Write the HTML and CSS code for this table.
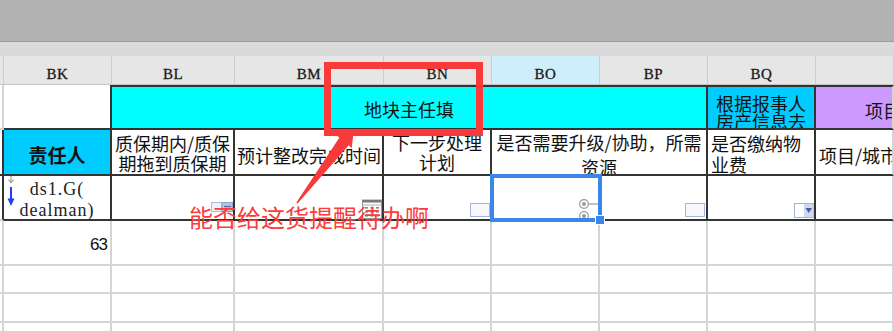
FILE: index.html
```html
<!DOCTYPE html>
<html lang="zh-CN">
<head>
<meta charset="utf-8">
<title>sheet</title>
<link rel="stylesheet" href="styles.css">
</head>
<body>
<div class="app">
  <div class="topbar"></div>
  <div class="band"></div>
  <div class="sheet">
    <!-- column headers -->
    <div class="h"></div>
    <div class="h">BK</div>
    <div class="h">BL</div>
    <div class="h">BM</div>
    <div class="h">BN</div>
    <div class="h hsel">BO</div>
    <div class="h">BP</div>
    <div class="h">BQ</div>
    <div class="h"></div>

    <!-- row 1 -->
    <div class="c"></div>
    <div class="c kr kb"></div>
    <div class="c k t cyan span5 r1title">地块主任填</div>
    <div class="c k t sky r1q">根据报事人<br>房产信息去</div>
    <div class="c kb t purple r1r">项目</div>

    <!-- row 2 -->
    <div class="c kr kb"></div>
    <div class="c k sky r2k">责任人</div>
    <div class="c k r2l">质保期内/质保<br>期拖到质保期</div>
    <div class="c k r2m">预计整改完成时间</div>
    <div class="c k r2n">下一步处理<br>计划</div>
    <div class="c k span2 r2o">是否需要升级/协助，所需<br>资源</div>
    <div class="c k r2q">是否缴纳物<br>业费</div>
    <div class="c kb r2r">项目/城市</div>

    <!-- row 3 -->
    <div class="c kr"></div>
    <div class="c k r3k">
      <svg class="mini-arrow" width="6" height="8" viewBox="0 0 6 8"><path d="M3 0V6M0.5 3.5L3 7L5.5 3.5" fill="none" stroke="#8a8a8a" stroke-width="1"/></svg>
      <svg class="blue-arrow" width="8" height="20" viewBox="0 0 8 20"><path d="M4 0V13" stroke="#1b3dff" stroke-width="2"/><path d="M0.5 11.5H7.5L4 19Z" fill="#1b3dff"/></svg>
      ds1.G(<br>dealman)
    </div>
    <div class="c k ico ico-bl">
      <svg width="22" height="10" viewBox="0 0 22 10"><rect x="0.5" y="0.5" width="10" height="9" fill="#eef3fb" stroke="#a9bde0"/><rect x="11" y="0.5" width="10.5" height="9" fill="#b7c5e0" stroke="#8fa3c8"/><path d="M13 4.5H20" stroke="#5c6f9a" stroke-width="1.4"/></svg>
    </div>
    <div class="c k ico ico-bm">
      <svg width="20" height="20" viewBox="0 0 20 20"><rect x="0.5" y="1" width="19" height="18.5" fill="#fbfbfb" stroke="#9a9a9a"/><rect x="0.5" y="1" width="19" height="2.5" fill="#7a7a7a"/><path d="M1 6H19" stroke="#b5b5b5"/><g fill="#8c8c8c"><rect x="3" y="8" width="3" height="1.6"/><rect x="8.5" y="8" width="3" height="1.6"/><rect x="14" y="8" width="3" height="1.6"/><rect x="3" y="12" width="3" height="1.6"/><rect x="8.5" y="12" width="3" height="1.6"/><rect x="14" y="12" width="3" height="1.6"/><rect x="3" y="16" width="3" height="1.6"/><rect x="8.5" y="16" width="3" height="1.6"/><rect x="14" y="16" width="3" height="1.6"/></g></svg>
    </div>
    <div class="c k ico ico-bn">
      <svg width="20" height="14" viewBox="0 0 20 14"><rect x="0.5" y="0.5" width="19" height="13" fill="#f5f8fd" stroke="#a3b6da"/></svg>
    </div>
    <div class="c k ico ico-bo">
      <div class="selection"><span class="handle"></span></div>
      <svg width="20" height="21" viewBox="0 0 20 21"><g stroke="#9a9a9a" fill="#fff" stroke-width="1.2"><circle cx="6" cy="6" r="4.4"/><circle cx="6" cy="18" r="4.4"/><path d="M10.5 6H20"/></g><g fill="#9a9a9a"><circle cx="6" cy="6" r="2"/><circle cx="6" cy="18" r="2"/></g></svg>
    </div>
    <div class="c k ico ico-bp">
      <svg width="20" height="14" viewBox="0 0 20 14"><rect x="0.5" y="0.5" width="19" height="13" fill="#f5f8fd" stroke="#a3b6da"/></svg>
    </div>
    <div class="c k ico ico-bq">
      <svg width="20" height="15" viewBox="0 0 20 15"><rect x="0.5" y="0.5" width="19" height="14" fill="#fff" stroke="#a3b6da"/><rect x="10" y="1" width="9.5" height="13" fill="#cdd9ef"/><path d="M11.5 5H18L14.75 10Z" fill="#4a5c9c"/></svg>
    </div>
    <div class="c kb"></div>

    <!-- row 4 -->
    <div class="c"></div>
    <div class="c num">63</div>
    <div class="c"></div>
    <div class="c"></div>
    <div class="c"></div>
    <div class="c"></div>
    <div class="c"></div>
    <div class="c"></div>
    <div class="c"></div>

    <!-- row 5 -->
    <div class="c"></div><div class="c"></div><div class="c"></div><div class="c"></div><div class="c"></div><div class="c"></div><div class="c"></div><div class="c"></div><div class="c"></div>
    <!-- row 6 -->
    <div class="c"></div><div class="c"></div><div class="c"></div><div class="c"></div><div class="c"></div><div class="c"></div><div class="c"></div><div class="c"></div><div class="c"></div>
    <!-- row 7 -->
    <div class="c"></div><div class="c"></div><div class="c"></div><div class="c"></div><div class="c"></div><div class="c"></div><div class="c"></div><div class="c"></div><div class="c"></div>
  </div>

  <div class="annot">
    <div class="redbox"></div>
    <svg class="arrow" width="894" height="331" viewBox="0 0 894 331">
      <polygon fill="#f83a3a" points="296.4,202.6 339.3,137.7 336.3,134.8 354,129 351.7,148.2 348.7,145.3 297.6,203.4"/>
    </svg>
    <div class="note">能否给这货提醒待办啊</div>
  </div>
</div>
</body>
</html>
```

FILE: styles.css
```css
html, body {
  margin: 0;
  padding: 0;
  background: #ffffff;
}

.app {
  position: relative;
  width: 894px;
  height: 331px;
  overflow: hidden;
  font-family: "Noto Sans CJK SC", "Noto Sans", sans-serif;
  font-size: 18px;
  color: #111;
}

.topbar {
  height: 41px;
  background: #b3b3b3;
  border-bottom: 1px solid #9c9c9c;
}

.band {
  height: 14px;
  background: #dadada;
}

.sheet {
  display: grid;
  grid-template-columns: 4px 108px 123px 149px 108px 108px 108px 108px 1fr;
  grid-template-rows: 29px 45px 46px 45px 45px 28px 29px 29px;
}

/* column headers */
.h {
  box-sizing: border-box;
  background: #e6e6e6;
  border-right: 1px solid #cdcdcd;
  border-bottom: 1px solid #c4c4c4;
  font-family: "Liberation Serif", serif;
  font-size: 15px;
  letter-spacing: 0.5px;
  line-height: 20px;
  padding-top: 8px;
  text-align: center;
  color: #1a1a1a;
  -webkit-text-stroke: 0.3px #1a1a1a;
}

.hsel {
  background: #cdeefa;
}

/* cells */
.c {
  position: relative;
  box-sizing: border-box;
  border-right: 2px solid #d4d4d4;
  border-bottom: 2px solid #d4d4d4;
  overflow: hidden;
  white-space: nowrap;
  line-height: 20px;
}

.k { border-right-color: #333; border-bottom-color: #333; }
.kr { border-right-color: #333; }
.kb { border-bottom-color: #333; }
.t { border-top: 2px solid #333; }

.span5 { grid-column: span 5; }
.span2 { grid-column: span 2; }

.cyan { background: #00ffff; }
.sky { background: #00ccff; }
.purple { background: #cc99ff; }

.r1title {
  text-align: center;
  padding-top: 12px;
}

.r1q {
  text-align: center;
  line-height: 18px;
  padding-top: 7px;
}

.r1r {
  padding-left: 49px;
  padding-top: 13px;
}

.r2k {
  text-align: center;
  font-weight: bold;
  font-size: 19px;
  padding-top: 15px;
}

.r2l {
  text-align: center;
  padding-top: 3px;
}

.r2m {
  padding-left: 2px;
  padding-top: 15px;
}

.r2n {
  text-align: center;
  padding-top: 2px;
}

.r2o {
  text-align: center;
  line-height: 25px;
}

.r2q {
  padding-left: 3px;
  line-height: 21px;
  padding-top: 3px;
}

.r2r {
  padding-left: 3px;
  padding-top: 15px;
}

.r3k {
  text-align: center;
  font-family: "Liberation Serif", serif;
  font-size: 18px;
  letter-spacing: 1px;
  line-height: 21px;
  padding-top: 3px;
  color: #222;
}

.mini-arrow {
  position: absolute;
  left: 4px;
  top: 0;
}

.blue-arrow {
  position: absolute;
  left: 3px;
  top: 11px;
}

.ico {
  display: flex;
  justify-content: flex-end;
  align-items: flex-end;
}

.ico svg { display: block; }

.ico-bl { padding-bottom: 7px; }
.ico-bm { padding-bottom: 0; }
.ico-bn { padding-bottom: 2px; }
.ico-bp { padding-bottom: 2px; padding-right: 1px; }
.ico-bq { padding-bottom: 1px; }

.ico-bo {
  overflow: visible;
}

.selection {
  position: absolute;
  left: -2px;
  top: -2px;
  right: -4px;
  bottom: -3px;
  border: 4px solid #3b87e9;
  z-index: 5;
}

.handle {
  position: absolute;
  right: -7px;
  bottom: -7px;
  width: 8px;
  height: 8px;
  background: #3b87e9;
  border: 1px solid #ffffff;
}

.num {
  text-align: right;
  font-family: "Liberation Sans", sans-serif;
  font-size: 17px;
  letter-spacing: -1px;
  padding-right: 3px;
  padding-top: 14px;
  color: #111;
}

/* annotation overlay */
.annot {
  position: absolute;
  left: 0;
  top: 0;
  width: 894px;
  height: 331px;
  pointer-events: none;
  z-index: 10;
}

.redbox {
  position: absolute;
  left: 324px;
  top: 62px;
  width: 159px;
  height: 74px;
  box-sizing: border-box;
  border: 7px solid #f83a3a;
}

.arrow {
  position: absolute;
  left: 0;
  top: 0;
}

.note {
  position: absolute;
  left: 189px;
  top: 205px;
  font-family: "Noto Sans CJK SC", sans-serif;
  font-size: 24px;
  line-height: 24px;
  color: #fa3c3c;
  white-space: nowrap;
}
```
